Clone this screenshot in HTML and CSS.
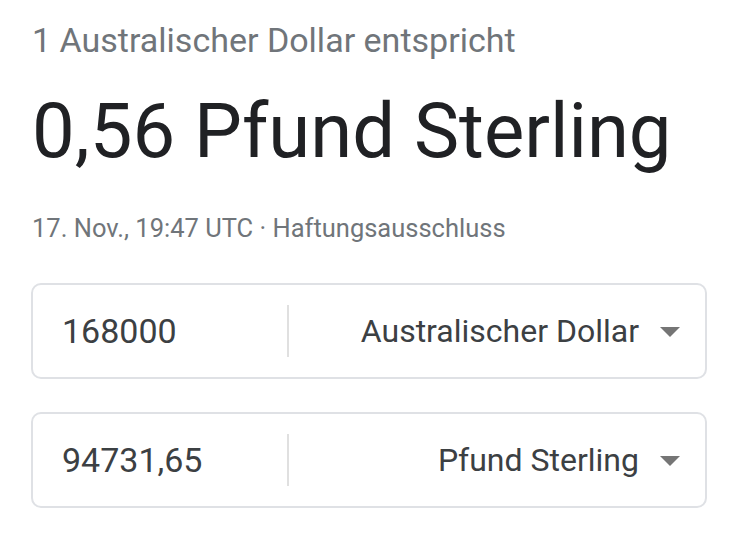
FILE: index.html
```html
<!DOCTYPE html>
<html lang="de">
<head>
<meta charset="utf-8">
<link rel="stylesheet" href="styles.css">
</head>
<body>
<div class="page">
  <div class="subtitle">1 Australischer Dollar entspricht</div>
  <div class="headline">0,56 Pfund Sterling</div>
  <div class="meta">17. Nov., 19:47 UTC · Haftungsausschluss</div>
  <div class="box">
    <div class="amount">168000</div>
    <div class="divider"></div>
    <div class="currency">Australischer Dollar<span class="arrow"></span></div>
  </div>
  <div class="box">
    <div class="amount">94731,65</div>
    <div class="divider"></div>
    <div class="currency">Pfund Sterling<span class="arrow"></span></div>
  </div>
</div>
</body>
</html>
```
FILE: styles.css
```css
html, body { margin: 0; padding: 0; background: #fff; }
body { font-family: Roboto, "Noto Sans", sans-serif; }
.page { padding: 20px 26px 0 31px; display: flex; flex-direction: column; }
.subtitle { font-size: 34px; line-height: 40px; color: #70757a; margin-left: 1px; }
.headline { font-size: 76px; line-height: 90px; color: #202124; margin-top: 26px; margin-left: 1px; }
.meta { font-size: 25.5px; line-height: 32px; color: #70757a; margin-top: 36px; margin-left: 1px; }
.box { display: flex; align-items: center; box-sizing: border-box; height: 96px; border: 2px solid #dfe1e5; border-radius: 10px; margin-top: 39px; }
.box + .box { margin-top: 33px; }
.amount { width: 225px; padding-left: 29px; font-size: 34px; color: #3c4043; }
.divider { width: 2px; height: 52px; background: #e0e0e0; }
.currency { flex: 1; display: flex; justify-content: flex-end; align-items: center; font-size: 32px; color: #3c4043; padding-right: 25px; }
.arrow { width: 0; height: 0; border-left: 10px solid transparent; border-right: 10px solid transparent; border-top: 10px solid #757575; margin-left: 21px; margin-top: 2px; }
```
